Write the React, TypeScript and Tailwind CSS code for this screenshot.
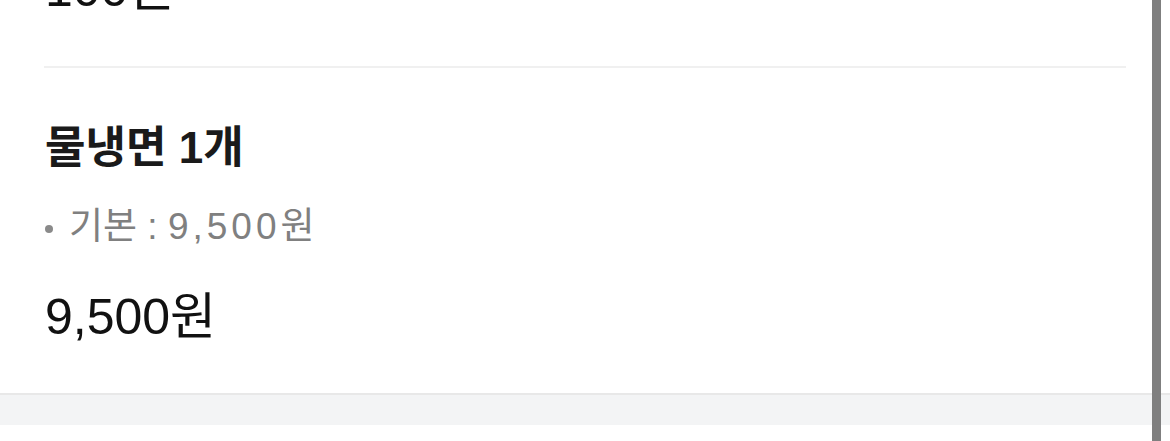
import React from "react";

export default function App() {
  return (
    <div
      className="relative w-[1170px] h-[441px] overflow-hidden bg-white"
      style={{ fontFamily: '"Liberation Sans", "Noto Sans CJK KR", sans-serif' }}
    >
      <div className="-mt-[41px]">
        <div className="px-[44px]">
          <div className="pb-[47px]">
            <div className="pl-[1px] text-[50px] leading-[60px] text-[#111111]">100원</div>
          </div>
          <div className="h-[2px] bg-[#f0f0f0]" />
          <div className="pt-[52px] pb-[46px]">
            <div className="pl-[1px] text-[44px] leading-[56px] font-bold text-[#1a1a1a]">물냉면 1개</div>
            <div className="mt-[27px] flex items-center whitespace-pre text-[37px] leading-[48px] text-[#808080]">
              <span className="ml-[1px] mr-[16px] inline-block w-[8px] h-[8px] rounded-full bg-[#8a8a8a] translate-y-[2px]" />
              <span>{"기본 : "}</span>
              <span className="tracking-[4px]">9,500</span>
              <span>원</span>
            </div>
            <div className="mt-[36px] pl-[1px] text-[50px] leading-[60px] text-[#111111]">9,500원</div>
          </div>
        </div>
        <div className="border-t-2 border-[#e8e8e8] bg-[#f3f4f5] h-[32px]" />
        <div className="h-[40px] bg-white" />
      </div>
      <div className="absolute top-0 left-[1152px] w-[9px] h-full bg-[#7f7f7f]" />
    </div>
  );
}
